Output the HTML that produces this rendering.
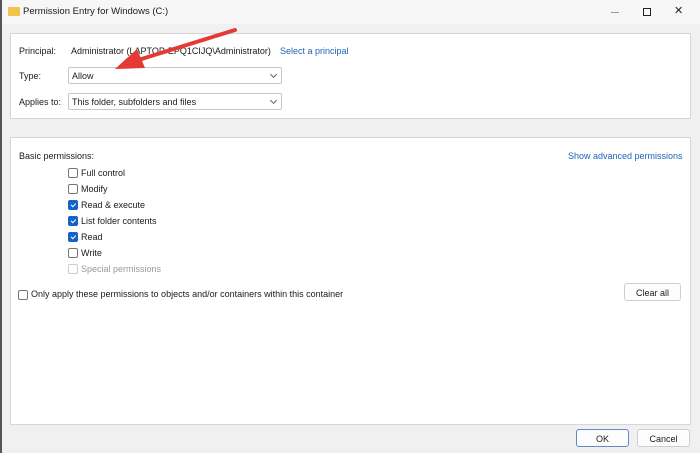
<!DOCTYPE html>
<html><head><style>
*{box-sizing:border-box;margin:0;padding:0}
body{width:700px;height:453px;overflow:hidden;background:#f0f0f0;font-family:"Liberation Sans",sans-serif;font-size:9px;color:#1a1a1a;position:relative}
.abs{position:absolute}
.panel{position:absolute;background:#fff;border:1px solid #d6d6d6}
.sel{position:absolute;background:#fff;border:1px solid #c8c8c8;border-radius:2px;height:17px;padding:3px 0 0 3px}
.sel:after{content:"";position:absolute;right:5px;top:4px;width:4px;height:4px;border-right:1px solid #666;border-bottom:1px solid #666;transform:rotate(45deg)}
.cb{position:absolute;width:10px;height:10px;border:1px solid #777;border-radius:2px;background:#fff}
.cb.on{background:#1563c6;border-color:#1563c6}
.cb.on:after{content:"";position:absolute;left:3px;top:1px;width:2px;height:4px;border-right:1px solid #fff;border-bottom:1px solid #fff;transform:rotate(45deg)}
.cb.dis{border-color:#ccc}
.btn{position:absolute;background:#fdfdfd;border:1px solid #cfcfcf;border-radius:3px;text-align:center;padding-top:4px}
.link{color:#1c64b9}
</style></head><body>
<div class="abs" style="left:0;top:0;width:700px;height:24px;background:#f7f7f7"></div>
<div class="abs" style="left:0;top:0;width:2px;height:453px;background:#555"></div>
<div class="abs" style="left:8px;top:7px;width:12px;height:9px;background:#f2c14e;border-radius:1px"></div>
<div class="abs" style="left:23px;top:6px;font-size:9.5px">Permission Entry for Windows (C:)</div>
<div class="abs" style="left:611px;top:12px;width:8px;height:1px;background:#999"></div>
<div class="abs" style="left:643px;top:8px;width:8px;height:8px;border:1px solid #222"></div>
<div class="abs" style="left:674px;top:4px;font-size:11px;color:#222">✕</div>

<div class="panel" style="left:10px;top:33px;width:681px;height:86px"></div>
<div class="abs" style="left:19px;top:46px">Principal:</div>
<div class="abs" style="left:71px;top:46px">Administrator (LAPTOP-EPQ1CIJQ\Administrator)</div>
<div class="abs link" style="left:280px;top:46px">Select a principal</div>
<div class="abs" style="left:19px;top:71px">Type:</div>
<div class="sel" style="left:68px;top:67px;width:214px">Allow</div>
<div class="abs" style="left:19px;top:97px">Applies to:</div>
<div class="sel" style="left:68px;top:93px;width:214px">This folder, subfolders and files</div>
<svg class="abs" style="left:110px;top:25px" width="130" height="50"><line x1="125" y1="5" x2="25" y2="36" stroke="#e53935" stroke-width="4" stroke-linecap="round"/><polygon points="5,44 27,24 35,43" fill="#e53935"/></svg>

<div class="panel" style="left:10px;top:137px;width:681px;height:288px"></div>
<div class="abs" style="left:19px;top:151px">Basic permissions:</div>
<div class="abs link" style="left:568px;top:151px">Show advanced permissions</div>
<div class="cb" style="left:68px;top:168px"></div><div class="abs" style="left:81px;top:168px">Full control</div>
<div class="cb" style="left:68px;top:184px"></div><div class="abs" style="left:81px;top:184px">Modify</div>
<div class="cb on" style="left:68px;top:200px"></div><div class="abs" style="left:81px;top:200px">Read &amp; execute</div>
<div class="cb on" style="left:68px;top:216px"></div><div class="abs" style="left:81px;top:216px">List folder contents</div>
<div class="cb on" style="left:68px;top:232px"></div><div class="abs" style="left:81px;top:232px">Read</div>
<div class="cb" style="left:68px;top:248px"></div><div class="abs" style="left:81px;top:248px">Write</div>
<div class="cb dis" style="left:68px;top:264px"></div><div class="abs" style="left:81px;top:264px;color:#999">Special permissions</div>
<div class="cb" style="left:18px;top:290px"></div><div class="abs" style="left:31px;top:289px">Only apply these permissions to objects and/or containers within this container</div>
<div class="btn" style="left:624px;top:283px;width:57px;height:18px">Clear all</div>

<div class="btn" style="left:576px;top:429px;width:53px;height:18px;border-color:#5b8ec9">OK</div>
<div class="btn" style="left:637px;top:429px;width:53px;height:18px">Cancel</div>
</body></html>
